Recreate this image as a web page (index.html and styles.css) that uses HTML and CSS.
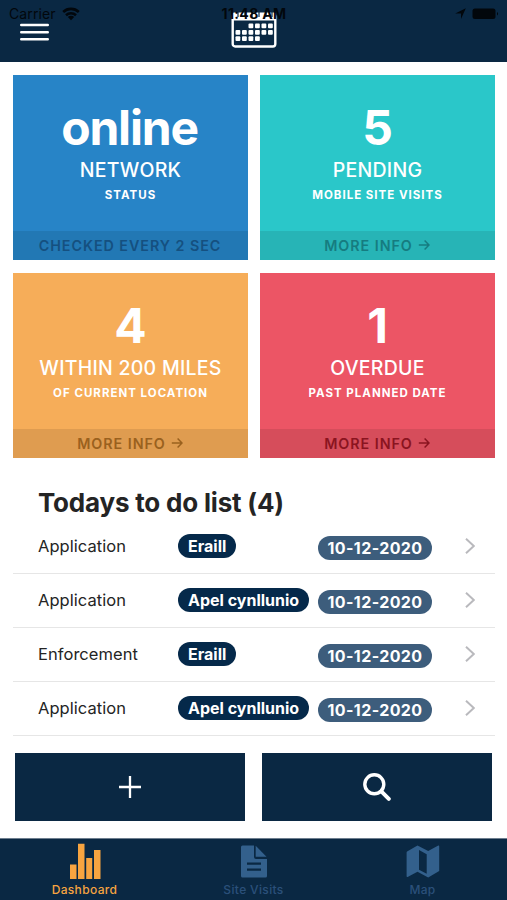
FILE: index.html
```
<!DOCTYPE html>
<html>
<head>
    <meta charset="utf-8">
    <title>Dashboard</title>
    <meta name="viewport" content="width=device-width, initial-scale=1.0">
    <link rel="stylesheet" href="styles.css">
</head>
<body>

    <header class="header">
        <svg class="menu-icon" width="29" height="18" viewBox="0 0 29 18">
            <path d="M1.2 2H27.8M1.2 9.2H27.8M1.2 16.2H27.8" stroke="#fff" stroke-width="2.4" stroke-linecap="round"/>
        </svg>
        <svg class="calendar-icon" width="46" height="37" viewBox="0 0 46 37">
            <rect x="1.7" y="3.5" width="42.6" height="32" rx="2.5" fill="none" stroke="#fff" stroke-width="2.4"/>
            <rect x="1" y="1.5" width="44" height="8" rx="2" fill="#fff"/>
            <path d="M7 1v5M14 1v5M21 1v5M28 1v5M35 1v5M41 1v5" stroke="#0a2843" stroke-width="1.2"/>
            <g fill="#fff">
                <rect x="17.5" y="12.5" width="4.8" height="4.8" rx="1"/>
                <rect x="24" y="12.5" width="4.8" height="4.8" rx="1"/>
                <rect x="30.5" y="12.5" width="4.8" height="4.8" rx="1"/>
                <rect x="37" y="12.5" width="4.8" height="4.8" rx="1"/>
                <rect x="4.5" y="19" width="4.8" height="4.8" rx="1"/>
                <rect x="11" y="19" width="4.8" height="4.8" rx="1"/>
                <rect x="17.5" y="19" width="4.8" height="4.8" rx="1"/>
                <rect x="24" y="19" width="4.8" height="4.8" rx="1"/>
                <rect x="30.5" y="19" width="4.8" height="4.8" rx="1"/>
                <rect x="37" y="19" width="4.8" height="4.8" rx="1"/>
                <rect x="4.5" y="25.2" width="4.8" height="4.8" rx="1"/>
                <rect x="11" y="25.2" width="4.8" height="4.8" rx="1"/>
                <rect x="17.5" y="25.2" width="4.8" height="4.8" rx="1"/>
                <rect x="24" y="25.2" width="4.8" height="4.8" rx="1"/>
            </g>
        </svg>
        <div class="status-bar">
            <div class="carrier">
                <span>Carrier</span>
                <svg width="18" height="14" viewBox="0 0 18 14">
                    <path d="M1.2 5a11.3 11.3 0 0 1 15.6 0M4 8.2a7.3 7.3 0 0 1 10 0" fill="none" stroke="#02070c" stroke-width="2.6"/>
                    <path d="M9 13.2L5.8 10a4.5 4.5 0 0 1 6.4 0z" fill="#02070c"/>
                </svg>
            </div>
            <div class="clock">11:48 AM</div>
            <div class="battery">
                <svg width="11" height="11" viewBox="0 0 11 11">
                    <path d="M10.8 .2L6 11V5.5H.2z" fill="#02070c"/>
                </svg>
                <svg width="27" height="12" viewBox="0 0 27 12">
                    <rect x=".5" y=".5" width="23" height="10.5" rx="2.5" fill="#02070c"/>
                    <path d="M25 4v3.6c1.4-.6 1.4-3 0-3.6z" fill="#02070c"/>
                </svg>
            </div>
        </div>
    </header>

    <main class="content">
        <div class="cards">
            <div class="card blue">
                <div class="card-body">
                    <div class="value online">online</div>
                    <div class="label">NETWORK</div>
                    <div class="sub">STATUS</div>
                </div>
                <div class="card-footer">CHECKED EVERY 2 SEC</div>
            </div>
            <div class="card teal">
                <div class="card-body">
                    <div class="value">5</div>
                    <div class="label">PENDING</div>
                    <div class="sub">MOBILE SITE VISITS</div>
                </div>
                <div class="card-footer">MORE INFO
                    <svg class="arrow" width="12" height="12" viewBox="0 0 12 12"><path d="M.8 6H11M6.6 1.5L11 6L6.6 10.5"/></svg>
                </div>
            </div>
            <div class="card orange">
                <div class="card-body">
                    <div class="value">4</div>
                    <div class="label">WITHIN 200 MILES</div>
                    <div class="sub">OF CURRENT LOCATION</div>
                </div>
                <div class="card-footer">MORE INFO
                    <svg class="arrow" width="12" height="12" viewBox="0 0 12 12"><path d="M.8 6H11M6.6 1.5L11 6L6.6 10.5"/></svg>
                </div>
            </div>
            <div class="card red">
                <div class="card-body">
                    <div class="value">1</div>
                    <div class="label">OVERDUE</div>
                    <div class="sub">PAST PLANNED DATE</div>
                </div>
                <div class="card-footer">MORE INFO
                    <svg class="arrow" width="12" height="12" viewBox="0 0 12 12"><path d="M.8 6H11M6.6 1.5L11 6L6.6 10.5"/></svg>
                </div>
            </div>
        </div>

        <h2 class="title">Todays to do list (4)</h2>

        <div class="list">
            <div class="row">
                <span class="type">Application</span>
                <span class="tag-cell"><span class="tag">Eraill</span></span>
                <span class="date">10-12-2020</span>
                <svg class="chevron" width="10" height="16" viewBox="0 0 10 16"><path d="M1 .8L8.8 8L1 15.2"/></svg>
            </div>
            <div class="row">
                <span class="type">Application</span>
                <span class="tag-cell"><span class="tag">Apel cynllunio</span></span>
                <span class="date">10-12-2020</span>
                <svg class="chevron" width="10" height="16" viewBox="0 0 10 16"><path d="M1 .8L8.8 8L1 15.2"/></svg>
            </div>
            <div class="row">
                <span class="type">Enforcement</span>
                <span class="tag-cell"><span class="tag">Eraill</span></span>
                <span class="date">10-12-2020</span>
                <svg class="chevron" width="10" height="16" viewBox="0 0 10 16"><path d="M1 .8L8.8 8L1 15.2"/></svg>
            </div>
            <div class="row">
                <span class="type">Application</span>
                <span class="tag-cell"><span class="tag">Apel cynllunio</span></span>
                <span class="date">10-12-2020</span>
                <svg class="chevron" width="10" height="16" viewBox="0 0 10 16"><path d="M1 .8L8.8 8L1 15.2"/></svg>
            </div>
        </div>

        <div class="actions">
            <button class="action">
                <svg width="22" height="22" viewBox="0 0 22 22"><path d="M11 0V22M0 11H22" stroke="#fff" stroke-width="2.3"/></svg>
            </button>
            <button class="action">
                <svg width="28" height="28" viewBox="0 0 28 28">
                    <circle cx="11.3" cy="11.3" r="9.5" fill="none" stroke="#fff" stroke-width="3.4"/>
                    <path d="M18.3 18.3L25.8 25.8" stroke="#fff" stroke-width="4" stroke-linecap="round"/>
                </svg>
            </button>
        </div>
    </main>

    <nav class="tabs">
        <div class="tab active">
            <svg width="32" height="36" viewBox="0 0 32 36" fill="currentColor">
                <path d="M1 21.5h6.5V36H1zM9 .8h6.5V36H9zM17.2 15h6v21h-6zM25 7h6.5v29H25z"/>
            </svg>
            <span>Dashboard</span>
        </div>
        <div class="tab">
            <svg width="32" height="36" viewBox="0 0 32 36" fill="currentColor">
                <path d="M4.5 2.5H16V14a2 2 0 0 0 2 2H29V33a1.5 1.5 0 0 1-1.5 1.5H4.5A1.5 1.5 0 0 1 3 33V4A1.5 1.5 0 0 1 4.5 2.5z"/>
                <path d="M17.7 2.8V13.8H28.5z"/>
                <path d="M9 20.7H23M9 26.7H23" stroke="#0a2843" stroke-width="2.3"/>
            </svg>
            <span>Site Visits</span>
        </div>
        <div class="tab">
            <svg width="34" height="36" viewBox="0 0 34 36" fill="currentColor">
                <path fill-rule="evenodd" d="M1.5 8.2L11.5 2.5L22.2 8L32.3 2.5Q33.2 2.3 33.2 3.2V28L22.2 34.5L11.5 28.8L1.6 34Q.6 34.3 .6 33.3V9.5Q.6 8.7 1.5 8.2zM13 7V26.8L20.7 30.8V11.2z"/>
            </svg>
            <span>Map</span>
        </div>
    </nav>

</body>
</html>
```

FILE: styles.css
```
* {
    margin: 0;
    padding: 0;
    box-sizing: border-box;
}

body {
    width: 507px;
    height: 900px;
    display: flex;
    flex-direction: column;
    background: #fff;
    color: #242424;
    font-family: Inter, "Liberation Sans", sans-serif;
    overflow: hidden;
}

svg {
    display: block;
    flex: none;
}

.header {
    position: relative;
    height: 62px;
    display: grid;
    grid-template-columns: 1fr 46px 1fr;
    background: #0a2843;
}

.menu-icon {
    margin: 23px 0 0 20px;
}

.calendar-icon {
    margin-top: 11px;
}

/* the status bar sits over the header */
.status-bar {
    position: absolute;
    top: 5px;
    left: 0;
    width: 100%;
    height: 17px;
    padding: 0 8px 0 9px;
    display: grid;
    grid-template-columns: 1fr auto 1fr;
    align-items: center;
    color: #02070c;
    font-size: 14px;
    line-height: 17px;
}

.carrier {
    display: flex;
    align-items: center;
    gap: 6px;
    letter-spacing: 0.1px;
}

.clock {
    font-weight: 700;
    letter-spacing: 0.35px;
}

.battery {
    display: flex;
    justify-content: flex-end;
    align-items: center;
    gap: 6px;
}

.content {
    flex: 1;
    padding: 13px 12px 0 13px;
}

.cards {
    display: grid;
    grid-template-columns: 235px 235px;
    gap: 13px 12px;
}

.card {
    height: 185px;
    display: flex;
    flex-direction: column;
    color: #fff;
    text-align: center;
    white-space: nowrap;
}

.card-body {
    flex: 1;
    padding-top: 24px;
}

.value {
    font-size: 48px;
    line-height: 58px;
    font-weight: 700;
}

.online {
    padding-right: 2px;
    letter-spacing: -1.2px;
}

.label {
    margin-top: 1px;
    font-size: 19.5px;
    line-height: 24px;
    font-weight: 500;
    letter-spacing: 0.25px;
}

.sub {
    margin-top: 5px;
    font-size: 11.5px;
    line-height: 16px;
    font-weight: 700;
    letter-spacing: 1px;
}

.card-footer {
    height: 29px;
    padding-right: 1px;
    display: flex;
    align-items: center;
    justify-content: center;
    gap: 5px;
    font-size: 14.3px;
    font-weight: 600;
    letter-spacing: 0.95px;
}

.arrow {
    margin-bottom: 2px;
}

.arrow path {
    fill: none;
    stroke: currentColor;
    stroke-width: 1.5;
}

.blue { background: #2784c7; }
.blue .card-footer { background: #2278b4; color: #155080; }
.teal { background: #2ac7c9; }
.teal .card-footer { background: #27b4b6; color: #167c80; }
.orange { background: #f6ad59; }
.orange .card-footer { background: #df9c50; color: #9a611e; }
.red { background: #ec5565; }
.red .card-footer { background: #d64d5b; color: #8a1420; }

.title {
    height: 62px;
    padding: 29px 0 0 25px;
    font-size: 26px;
    line-height: 32px;
    font-weight: 700;
    letter-spacing: -0.2px;
}

.row {
    height: 54.1px;
    padding: 0 20px 1px 25px;
    display: flex;
    align-items: center;
    border-bottom: 1px solid #e6e6e6;
    font-size: 16px;
}

.type {
    width: 140px;
    font-size: 16.5px;
    letter-spacing: 0.05px;
}

.tag-cell {
    width: 140px;
    display: flex;
}

.tag,
.date {
    height: 24px;
    border-radius: 12px;
    line-height: 24px;
    font-weight: 700;
    color: #fff;
    white-space: nowrap;
}

.tag {
    padding: 0 10px;
    background: #05294a;
}

.date {
    width: 114px;
    margin-top: 3px;
    background: #3d5d7c;
    text-align: center;
    letter-spacing: 0.4px;
}

.chevron {
    margin-left: auto;
}

.chevron path {
    fill: none;
    stroke: #b9b9bd;
    stroke-width: 2;
}

.actions {
    padding: 17px 2.4px 0;
    display: grid;
    grid-template-columns: 230px 230px;
    gap: 17px;
}

.action {
    height: 68px;
    display: flex;
    align-items: center;
    justify-content: center;
    border: none;
    background: #0a2843;
}

.tabs {
    height: 62px;
    display: grid;
    grid-template-columns: 169px 169px 169px;
    background: #0a2843;
    border-top: 1px solid #6d7e8e;
}

.tab {
    padding-top: 4px;
    display: flex;
    flex-direction: column;
    align-items: center;
    color: #33608c;
    font-size: 12px;
    line-height: 15px;
    font-weight: 500;
}

.tab span {
    margin-top: 3px;
    color: #2b507a;
    letter-spacing: 0.35px;
}

.active,
.active span {
    color: #f7a440;
}
```
